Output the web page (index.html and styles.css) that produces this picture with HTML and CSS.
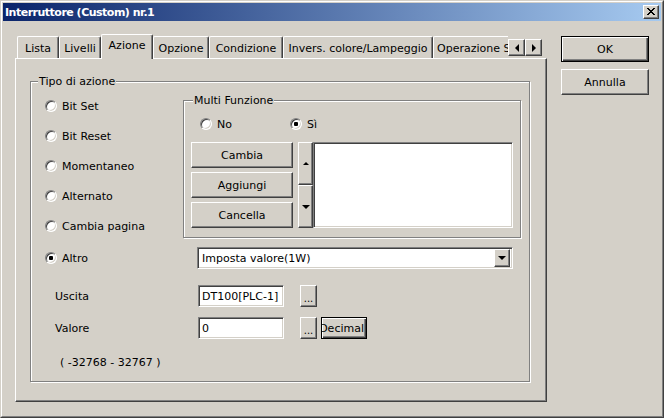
FILE: index.html
```html
<!DOCTYPE html>
<html>
<head>
<meta charset="utf-8">
<link rel="stylesheet" href="styles.css">
</head>
<body>
<div class="window">
  <div class="frame">
    <div class="titlebar">
      <span class="title">Interruttore (Custom) nr.1</span>
      <span class="closebtn"><svg width="8" height="7" viewBox="0 0 8 7" shape-rendering="crispEdges"><path d="M0 0h2v1H0zM6 0h2v1H6zM1 1h2v1H1zM5 1h2v1H5zM2 2h4v1H2zM3 3h2v1H3zM2 4h4v1H2zM1 5h2v1H1zM5 5h2v1H5zM0 6h2v1H0zM6 6h2v1H6z" fill="#000"/></svg></span>
    </div>
    <div class="client">
      <div class="tabctl">
        <div class="tabstrip">
          <div class="tab w-lista">Lista</div>
          <div class="tab w-livelli">Livelli</div>
          <div class="tab sel w-azione">Azione</div>
          <div class="tab w-opzione">Opzione</div>
          <div class="tab w-cond">Condizione</div>
          <div class="tab w-invers">Invers. colore/Lampeggio</div>
          <div class="tab w-oper">Operazione Speciale</div>
        </div>
        <div class="tabscroll">
          <span class="btn scrollbtn"><span class="tri-left"></span></span>
          <span class="btn scrollbtn"><span class="tri-right"></span></span>
        </div>
        <div class="panel">
          <div class="group main">
            <div class="legend legend-main">Tipo di azione</div>
            <div class="toprow">
              <div class="radios">
                <div class="radio"><span class="rb"></span><span>Bit Set</span></div>
                <div class="radio"><span class="rb"></span><span>Bit Reset</span></div>
                <div class="radio"><span class="rb"></span><span>Momentaneo</span></div>
                <div class="radio"><span class="rb"></span><span>Alternato</span></div>
                <div class="radio"><span class="rb"></span><span>Cambia pagina</span></div>
              </div>
              <div class="group multi">
                <div class="legend legend-multi">Multi Funzione</div>
                <div class="yn">
                  <div class="radio r-no"><span class="rb"></span><span>No</span></div>
                  <div class="radio"><span class="rb on"></span><span>Sì</span></div>
                </div>
                <div class="mfbody">
                  <div class="btncol">
                    <div class="btn mfbtn">Cambia</div>
                    <div class="btn mfbtn">Aggiungi</div>
                    <div class="btn mfbtn">Cancella</div>
                  </div>
                  <div class="spin">
                    <div class="btn spinbtn"><span class="tri-up"></span></div>
                    <div class="btn spinbtn"><span class="tri-down"></span></div>
                  </div>
                  <div class="sunken listbox"></div>
                </div>
              </div>
            </div>
            <div class="altrorow">
              <div class="radio r-altro"><span class="rb on"></span><span>Altro</span></div>
              <div class="sunken combo">
                <span class="combo-text">Imposta valore(1W)</span>
                <span class="btn combo-btn"><span class="tri-down"></span></span>
              </div>
            </div>
            <div class="field f-uscita">
              <span class="flabel">Uscita</span>
              <span class="sunken edit">DT100[PLC-1]</span>
              <span class="btn dots">...</span>
            </div>
            <div class="field f-valore">
              <span class="flabel">Valore</span>
              <span class="sunken edit">0</span>
              <span class="btn dots">...</span>
              <span class="btn def decimal"><span>Decimal</span></span>
            </div>
            <div class="range">( -32768 - 32767 )</div>
          </div>
        </div>
      </div>
      <div class="side">
        <div class="btn def sidebtn">OK</div>
        <div class="btn sidebtn">Annulla</div>
      </div>
    </div>
  </div>
</div>
</body>
</html>
```

FILE: styles.css
```css
* { box-sizing: border-box; }
html, body { margin: 0; padding: 0; background: #d4d0c8; }
body { font-family: "DejaVu Sans", sans-serif; font-size: 11px; line-height: 13px; color: #000; }

.window {
  width: 664px; height: 418px;
  background: #d4d0c8;
  border: 1px solid; border-color: #d4d0c8 #404040 #404040 #d4d0c8;
}
.frame {
  height: 100%;
  border: 1px solid; border-color: #fff #808080 #808080 #fff;
  padding: 1px;
}

.titlebar {
  height: 18px;
  background: linear-gradient(to right, #0a246a, #a6caf0);
  display: flex; align-items: center; justify-content: space-between;
  padding: 0 2px 0 2px;
}
.title { color: #fff; font-weight: bold; font-size: 11px; letter-spacing: -0.5px; }
.closebtn {
  width: 16px; height: 14px;
  background: #d4d0c8;
  border: 1px solid; border-color: #fff #404040 #404040 #fff;
  box-shadow: inset -1px -1px #808080;
  display: flex; align-items: center; justify-content: center;
  padding: 0 0 1px 0;
}
.closebtn svg { display: block; }

.client { display: flex; align-items: flex-start; }

.tabctl { position: relative; width: 532px; margin: 13px 0 0 12px; }
.tabstrip {
  position: relative; z-index: 1;
  display: flex; align-items: flex-end;
  width: 493px;
  height: 25px; margin-bottom: -1px;
  padding-left: 2px; overflow: hidden;
}
.tab {
  flex-shrink: 0;
  height: 22px; margin-bottom: 1px;
  border-top: 1px solid #fff; border-left: 1px solid #fff; border-right: 1px solid #404040;
  border-radius: 2px 2px 0 0;
  box-shadow: inset -1px 0 #808080;
  background: #d4d0c8;
  text-align: center; white-space: nowrap; overflow: hidden;
  padding-top: 5px;
}
.tab.sel { height: 25px; margin-bottom: 0; padding-top: 4px; }
.w-lista { width: 42px; }
.w-livelli { width: 42px; }
.w-azione { width: 52px; }
.w-opzione { width: 56px; }
.w-cond { width: 74px; }
.w-invers { width: 150px; }
.w-oper { width: 120px; text-align: left; padding-left: 3px; }

.tabscroll { position: absolute; z-index: 2; top: 5px; left: 493px; display: flex; }
.scrollbtn { width: 17px; height: 17px; }
.tri-left { width: 0; height: 0; border-top: 4px solid transparent; border-bottom: 4px solid transparent; border-right: 4px solid #000; }
.tri-right { width: 0; height: 0; border-top: 4px solid transparent; border-bottom: 4px solid transparent; border-left: 4px solid #000; }
.tri-up { width: 0; height: 0; border-left: 3px solid transparent; border-right: 3px solid transparent; border-bottom: 3px solid #000; }
.tri-down { width: 0; height: 0; border-left: 4px solid transparent; border-right: 4px solid transparent; border-top: 4px solid #000; }

.panel {
  position: relative; z-index: 0;
  height: 344px;
  border: 1px solid; border-color: #fff #404040 #404040 #fff;
  box-shadow: inset -1px -1px #808080;
  padding: 22px 0 0 14px;
}

.btn {
  background: #d4d0c8;
  border: 1px solid; border-color: #fff #404040 #404040 #fff;
  box-shadow: inset -1px -1px #808080;
  display: flex; align-items: center; justify-content: center;
  white-space: nowrap;
}
.btn.def {
  border: 1px solid #000;
  box-shadow: inset 1px 1px #fff, inset -1px -1px #404040, inset -2px -2px #808080;
}
.sunken {
  background: #fff;
  border: 1px solid; border-color: #808080 #fff #fff #808080;
  box-shadow: inset 1px 1px #404040, inset -1px -1px #d4d0c8;
}

.group {
  border: 1px solid #808080;
  box-shadow: 1px 1px 0 #fff, inset 1px 1px 0 #fff;
  display: flex; flex-direction: column;
}
.legend {
  align-self: flex-start;
  background: #d4d0c8;
  padding: 0 1px;
  margin-top: -7px;
  height: 13px;
  white-space: nowrap;
}
.legend-main { margin-left: 7px; }
.legend-multi { margin-left: 9px; }

.main { width: 500px; height: 301px; }

.toprow { display: flex; margin-top: 3px; }
.radios { width: 152px; padding-left: 14px; display: flex; flex-direction: column; }
.radio { display: flex; align-items: center; height: 30px; white-space: nowrap; }
.radio .rb { margin-right: 5px; }
.rb {
  width: 12px; height: 12px; flex-shrink: 0;
  border-radius: 50%;
  border: 1px solid; border-color: #808080 #fff #fff #808080;
  background: #fff;
  box-shadow: inset 1px 1px #404040, inset -1px -1px #d4d0c8;
  display: flex; align-items: center; justify-content: center;
}
.rb.on::after { content: ""; width: 4px; height: 4px; background: #000; border-radius: 1px; }

.multi { width: 338px; height: 138px; margin-top: 9px; }
.yn { display: flex; margin-top: 9px; padding-left: 16px; }
.yn .radio { height: 16px; }
.r-no { width: 90px; }

.mfbody { display: flex; margin-top: 10px; padding-left: 7px; }
.btncol { display: flex; flex-direction: column; gap: 4px; }
.mfbtn { width: 102px; height: 26px; }
.spin { margin-left: 5px; display: flex; flex-direction: column; }
.spinbtn { width: 15px; height: 43px; }
.listbox { width: 200px; height: 86px; }

.altrorow { display: flex; align-items: center; height: 30px; margin-top: 2px; }
.r-altro { width: 152px; padding-left: 14px; }
.combo { width: 316px; height: 22px; margin-left: 14px; display: flex; align-items: center; padding: 2px 2px 2px 4px; }
.combo-text { flex: 1; white-space: nowrap; }
.combo-btn { width: 16px; height: 18px; }

.field { display: flex; align-items: center; height: 22px; padding-left: 24px; }
.f-uscita { margin-top: 12px; }
.f-valore { margin-top: 10px; }
.flabel { width: 143px; }
.edit { width: 86px; height: 22px; display: flex; align-items: center; padding-left: 3px; white-space: nowrap; }
.dots { width: 17px; height: 22px; margin-left: 16px; font-size: 10px; padding-top: 4px; }
.decimal { width: 46px; height: 22px; margin-left: 4px; overflow: hidden; justify-content: flex-end; padding-right: 2px; }
.decimal span { flex-shrink: 0; }
.range { margin-top: 17px; padding-left: 29px; white-space: nowrap; }

.side { display: flex; flex-direction: column; gap: 7px; margin: 15px 0 0 14px; }
.sidebtn { width: 88px; height: 26px; }
```
